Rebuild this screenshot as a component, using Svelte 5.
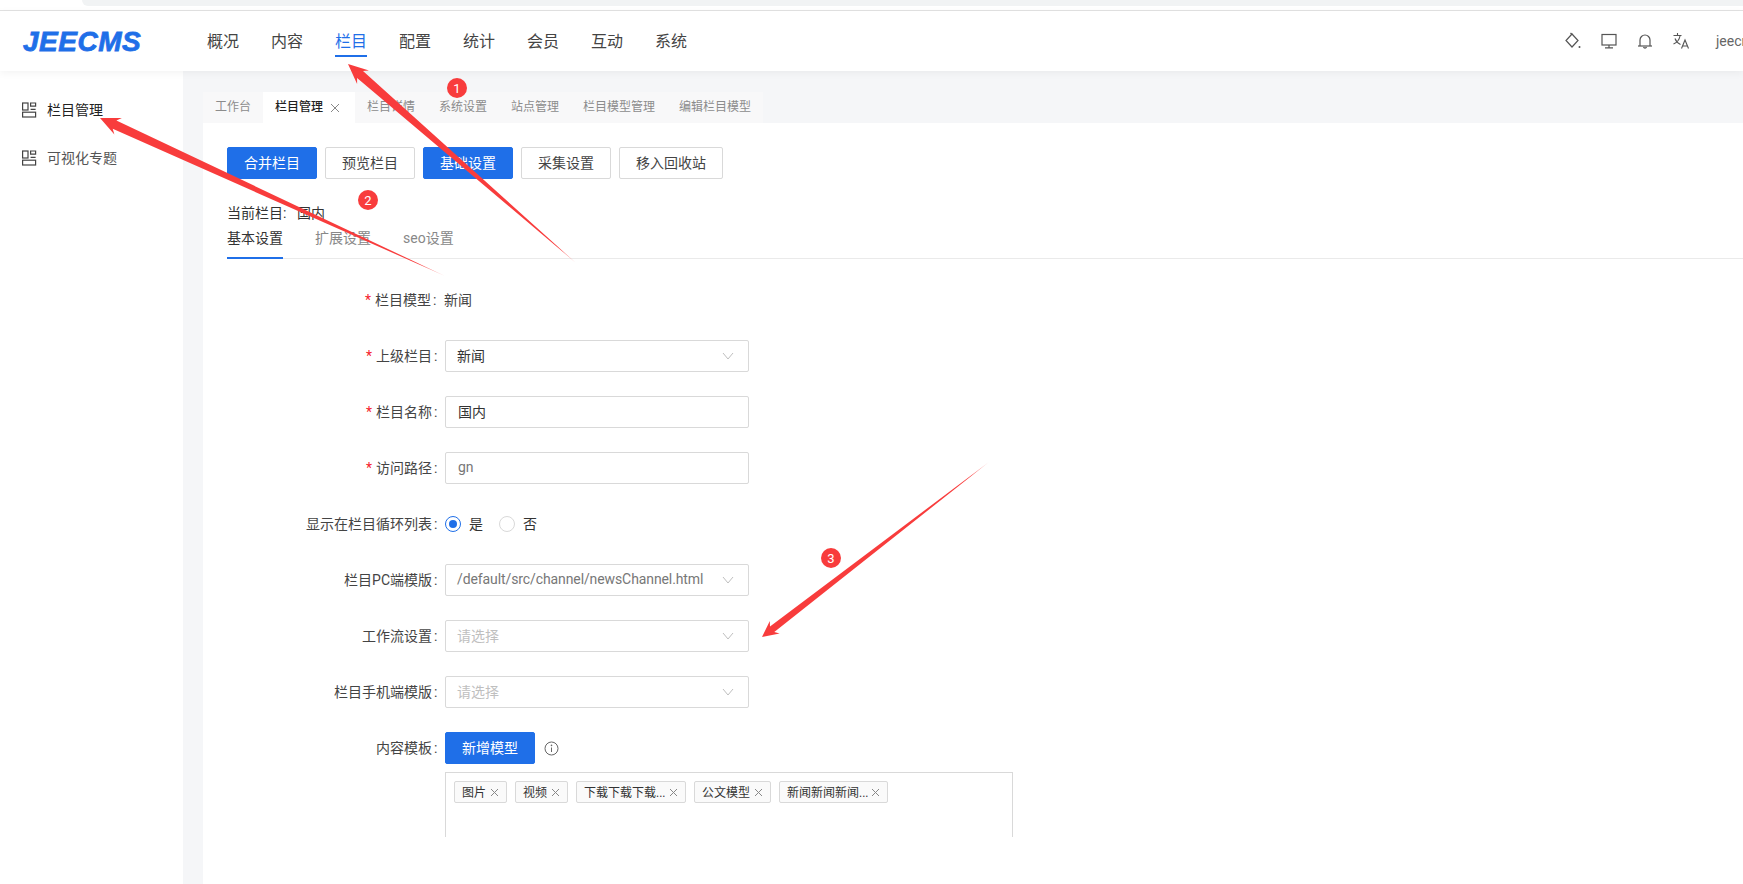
<script>
  const nav = ['概况', '内容', '栏目', '配置', '统计', '会员', '互动', '系统'];
  const tabs = ['工作台', '栏目管理', '栏目详情', '系统设置', '站点管理', '栏目模型管理', '编辑栏目模型'];
  const actions = [
    { t: '合并栏目', primary: true },
    { t: '预览栏目' },
    { t: '基础设置', primary: true },
    { t: '采集设置' },
    { t: '移入回收站' }
  ];
  const tags = [
    { t: '图片', w: 53 },
    { t: '视频', w: 53 },
    { t: '下载下载下载...', w: 110 },
    { t: '公文模型', w: 77 },
    { t: '新闻新闻新闻...', w: 109 }
  ];

  function arrow(tail, tip, len, half, neck) {
    const dx = tail[0] - tip[0], dy = tail[1] - tip[1];
    const d = Math.hypot(dx, dy);
    const ux = dx / d, uy = dy / d, px = -uy, py = ux;
    const at = (a, p) => `${(tip[0] + ux * a + px * p).toFixed(1)},${(tip[1] + uy * a + py * p).toFixed(1)}`;
    return [at(0, 0), at(len, half), at(len * 0.8, neck), `${tail[0]},${tail[1]}`, at(len * 0.8, -neck), at(len, -half)].join(' ');
  }
  const arrows = [
    { id: 'a1', tail: [576, 263], tip: [348, 64], len: 20, half: 9, neck: 4.5 },
    { id: 'a2', tail: [445, 276], tip: [100, 118], len: 20, half: 9, neck: 4.5 },
    { id: 'a3', tail: [989, 462], tip: [762, 637], len: 16, half: 8, neck: 3.5 }
  ];
  const badges = [
    { n: 1, x: 457, y: 88 },
    { n: 2, x: 368, y: 200 },
    { n: 3, x: 831, y: 558 }
  ];
</script>

<div class="page">
  <div class="chrome"><div class="chrome-tab"></div></div>

  <header class="header">
    <div class="logo">JEECMS</div>
    <nav class="nav">
      {#each nav as item}
        <span class="nav-item" class:active={item === '栏目'}>{item}</span>
      {/each}
    </nav>
    <div class="tools">
      <svg width="18" height="18" viewBox="0 0 18 18" fill="none" stroke="#555" stroke-width="1.2">
        <path d="M8 2 14 8.5 8 15 2 8.5Z" />
        <path d="M6.5 1 8 2.5" />
        <circle cx="15.5" cy="15" r="1" fill="#555" stroke="none" />
      </svg>
      <svg width="18" height="18" viewBox="0 0 18 18" fill="none" stroke="#555" stroke-width="1.2">
        <rect x="2" y="2.5" width="14" height="10.5" />
        <path d="M9 13v2.5M5 15.8h8" />
      </svg>
      <svg width="18" height="18" viewBox="0 0 18 18" fill="none" stroke="#555" stroke-width="1.2">
        <path d="M4 14V8a5 5 0 0 1 10 0v6" />
        <path d="M2 14h14" />
        <path d="M7.5 15a1.6 1.6 0 0 0 3 0" />
      </svg>
      <svg width="18" height="18" viewBox="0 0 18 18" fill="none" stroke="#555" stroke-width="1.1">
        <path d="M5.5 1v2M1.5 3.5h8M3 6.5c1 3 3.5 5 5.5 6M8 4c-.6 3.5-3 6.5-6.5 8" />
        <path d="M9.5 16.5 13 8l3.5 8.5M10.7 14h4.6" />
      </svg>
      <span class="user">jeecms</span>
    </div>
  </header>

  <div class="body">
    <aside class="side">
      {#each ['栏目管理', '可视化专题'] as s, i}
        <div class="side-item" class:cur={i === 0}>
          <svg width="16" height="16" viewBox="0 0 16 16" fill="none" stroke="#444" stroke-width="1.2">
            <rect x="1.6" y="1" width="5.4" height="7" />
            <path d="M9.6 1h5v3.2h-5zM9.6 7.4h5" />
            <rect x="1.6" y="10.2" width="13" height="4.8" />
          </svg>
          <span>{s}</span>
        </div>
      {/each}
    </aside>

    <main class="main">
      <div class="tabstrip">
        {#each tabs as t}
          <span class="tab" class:on={t === '栏目管理'}>
            {t}
            {#if t === '栏目管理'}
              <svg class="tab-x" width="10" height="10" viewBox="0 0 10 10" stroke="#888" stroke-width="1" fill="none"><path d="M1 1l8 8M9 1 1 9" /></svg>
            {/if}
          </span>
        {/each}
      </div>

      <section class="panel">
        <div class="actions">
          {#each actions as a}
            <button class="btn" class:primary={a.primary}>{a.t}</button>
          {/each}
        </div>
        <div class="current"><span class="cur-l">当前栏目:</span>国内</div>
        <div class="subtabs">
          <span class="subtab on">基本设置</span>
          <span class="subtab">扩展设置</span>
          <span class="subtab">seo设置</span>
        </div>

        <div class="form">
          <div class="row">
            <div class="label early"><i>*</i>栏目模型<b>:</b></div>
            <div class="static">新闻</div>
          </div>
          <div class="row">
            <div class="label"><i>*</i>上级栏目<b>:</b></div>
            <div class="select"><span>新闻</span>{@render chevron()}</div>
          </div>
          <div class="row">
            <div class="label"><i>*</i>栏目名称<b>:</b></div>
            <div class="select input"><span>国内</span></div>
          </div>
          <div class="row">
            <div class="label"><i>*</i>访问路径<b>:</b></div>
            <div class="select input"><span class="dim">gn</span></div>
          </div>
          <div class="row">
            <div class="label">显示在栏目循环列表<b>:</b></div>
            <div class="radios">
              <span class="radio checked"></span><span class="rt">是</span>
              <span class="radio"></span><span class="rt">否</span>
            </div>
          </div>
          <div class="row">
            <div class="label">栏目PC端模版<b>:</b></div>
            <div class="select"><span class="dim path">/default/src/channel/newsChannel.html</span>{@render chevron()}</div>
          </div>
          <div class="row">
            <div class="label">工作流设置<b>:</b></div>
            <div class="select"><span class="ph">请选择</span>{@render chevron()}</div>
          </div>
          <div class="row">
            <div class="label">栏目手机端模版<b>:</b></div>
            <div class="select"><span class="ph">请选择</span>{@render chevron()}</div>
          </div>
          <div class="row last">
            <div class="label">内容模板<b>:</b></div>
            <button class="btn primary">新增模型</button>
            <svg class="info" width="15" height="15" viewBox="0 0 15 15" fill="none" stroke="#666" stroke-width="1">
              <circle cx="7.5" cy="7.5" r="6.5" />
              <path d="M7.5 6.5v4.5" />
              <circle cx="7.5" cy="4.4" r=".8" fill="#666" stroke="none" />
            </svg>
          </div>
          <div class="tagbox">
            {#each tags as tag}
              <span class="tag" style="width:{tag.w}px">
                <span class="tag-t">{tag.t}</span>
                <svg width="9" height="9" viewBox="0 0 9 9" stroke="#888" stroke-width="1" fill="none"><path d="M1 1l7 7M8 1 1 8" /></svg>
              </span>
            {/each}
          </div>
        </div>
      </section>
    </main>
  </div>

  <svg class="marks" width="1743" height="884" viewBox="0 0 1743 884">
    <defs>
      {#each arrows as a}
        <linearGradient id={a.id} gradientUnits="userSpaceOnUse" x1={a.tip[0]} y1={a.tip[1]} x2={a.tail[0]} y2={a.tail[1]}>
          <stop offset="0" stop-color="#f83c3c" />
          <stop offset="0.92" stop-color="#f83c3c" />
          <stop offset="1" stop-color="#f83c3c" stop-opacity="0.4" />
        </linearGradient>
      {/each}
    </defs>
    {#each arrows as a}
      <polygon points={arrow(a.tail, a.tip, a.len, a.half, a.neck)} fill="url(#{a.id})" />
    {/each}
    {#each badges as b}
      <circle cx={b.x} cy={b.y} r="10" fill="#f83c3c" />
      <text x={b.x} y={b.y + 4.5} text-anchor="middle" class="badge-text">{b.n}</text>
    {/each}
  </svg>
</div>

{#snippet chevron()}
  <svg class="chev" width="12" height="8" viewBox="0 0 12 8" fill="none" stroke="#bfbfbf" stroke-width="1"><path d="M1 1l5 6 5-6" /></svg>
{/snippet}

<style>
  :global(body) {
    margin: 0;
    background: #fff;
  }
  .page {
    position: relative;
    width: 1743px;
    height: 884px;
    overflow: hidden;
    display: flex;
    flex-direction: column;
    font-family: Roboto, "Noto Sans CJK SC", sans-serif;
    font-size: 14px;
    color: #333;
    background: #fff;
  }
  .chrome {
    flex: none;
    height: 11px;
    box-sizing: border-box;
    border-bottom: 1px solid #e2e2e2;
  }
  .chrome-tab {
    height: 6px;
    margin-left: 82px;
    background: #f1f3f4;
    border-radius: 0 0 0 10px;
  }
  .header {
    flex: none;
    height: 60px;
    display: flex;
    align-items: center;
    background: #fff;
    position: relative;
    z-index: 1;
    box-shadow: 0 2px 8px rgba(0, 0, 0, 0.05);
  }
  .logo {
    width: 184px;
    padding: 2px 0 0 23px;
    box-sizing: border-box;
    flex: none;
    font-family: "Liberation Sans", sans-serif;
    font-weight: 700;
    font-style: italic;
    font-size: 28px;
    letter-spacing: 0.5px;
    color: #1f6fe8;
    -webkit-text-stroke: 0.8px #1f6fe8;
  }
  .nav {
    display: flex;
    gap: 32px;
    padding-left: 23px;
    flex: 1;
  }
  .nav-item {
    font-size: 16px;
    line-height: 32px;
    height: 30px;
    position: relative;
    color: #444;
    width: 32px;
    white-space: nowrap;
  }
  .nav-item.active {
    color: #1f6fe8;
  }
  .nav-item.active::after {
    content: "";
    position: absolute;
    left: 0;
    right: 0;
    bottom: -1px;
    height: 2px;
    background: #1f6fe8;
  }
  .tools {
    display: flex;
    align-items: center;
    gap: 18px;
    width: 179px;
    flex: none;
    overflow: hidden;
    box-sizing: border-box;
  }
  .tools svg {
    flex: none;
  }
  .user {
    color: #666;
    font-size: 14px;
    white-space: nowrap;
    margin-left: 8px;
  }
  .body {
    flex: 1;
    display: flex;
    min-height: 0;
  }
  .side {
    width: 183px;
    flex: none;
    padding-top: 15px;
    background: #fff;
    box-sizing: border-box;
  }
  .side-item {
    height: 48px;
    display: flex;
    align-items: center;
    gap: 10px;
    padding-left: 21px;
    color: #555;
  }
  .side-item span {
    padding-bottom: 2px;
  }
  .side-item.cur {
    color: #222;
  }
  .main {
    flex: 1;
    background: #f5f6f8;
    padding: 21px 0 0 20px;
    display: flex;
    flex-direction: column;
    min-width: 0;
  }
  .tabstrip {
    flex: none;
    display: flex;
    width: 560px;
    height: 31px;
    background: #f8f8f9;
    font-size: 12px;
    color: #8c8c8c;
  }
  .tab {
    padding: 0 12px;
    line-height: 31px;
    white-space: nowrap;
  }
  .tab.on {
    background: #fff;
    color: #222;
    font-weight: 500;
    display: flex;
    align-items: center;
    gap: 7px;
    padding-right: 15px;
  }
  .panel {
    flex: 1;
    background: #fff;
    padding: 24px 0 0 24px;
    min-height: 0;
  }
  .actions {
    display: flex;
    gap: 8px;
  }
  .btn {
    height: 32px;
    padding: 0 16px 3px;
    font: inherit;
    color: #444;
    background: #fff;
    border: 1px solid #d9d9d9;
    border-radius: 2px;
    flex: none;
    box-sizing: border-box;
  }
  .btn.primary {
    background: #1f6fe8;
    border-color: #1f6fe8;
    color: #fff;
  }
  .current {
    margin-top: 24px;
    line-height: 20px;
    color: #333;
  }
  .cur-l {
    display: inline-block;
    width: 70px;
  }
  .subtabs {
    display: flex;
    gap: 32px;
    height: 36px;
    border-bottom: 1px solid #eaeaea;
    box-sizing: border-box;
    padding-top: 5px;
  }
  .subtab {
    height: 31px;
    line-height: 20px;
    color: #888;
    box-sizing: border-box;
  }
  .subtab.on {
    color: #333;
    border-bottom: 2px solid #1f6fe8;
  }
  .form {
    margin-left: -24px;
    margin-top: 25px;
    height: 553px;
    overflow: hidden;
  }
  .row {
    display: flex;
    align-items: center;
    height: 32px;
    margin-bottom: 24px;
  }
  .row.last {
    margin-bottom: 8px;
  }
  .label {
    width: 242px;
    flex: none;
    padding: 0 8px 3px 0;
    box-sizing: border-box;
    text-align: right;
    color: #444;
    white-space: nowrap;
  }
  .label.early {
    padding-right: 9px;
  }
  .label i {
    font-style: normal;
    color: #f5222d;
    margin-right: 4px;
  }
  .label b {
    font-weight: 400;
    margin-left: 2px;
    display: inline-block;
    width: 3px;
  }
  .static {
    color: #444;
    margin-left: -1px;
    padding-bottom: 3px;
  }
  .select {
    width: 304px;
    height: 32px;
    border: 1px solid #d9d9d9;
    border-radius: 2px;
    box-sizing: border-box;
    padding: 0 14px 0 11px;
    display: flex;
    align-items: center;
    justify-content: space-between;
    color: #333;
  }
  .select > span {
    padding-bottom: 3px;
  }
  .select.input {
    padding-left: 12px;
  }
  .dim {
    color: #777;
  }
  .path {
    letter-spacing: -0.1px;
  }
  .ph {
    color: #bfbfbf;
  }
  .radios {
    display: flex;
    align-items: center;
  }
  .radio {
    width: 16px;
    height: 16px;
    border-radius: 50%;
    border: 1px solid #d9d9d9;
    box-sizing: border-box;
    position: relative;
    flex: none;
  }
  .radio.checked {
    border-color: #1f6fe8;
  }
  .radio.checked::after {
    content: "";
    position: absolute;
    inset: 3px;
    border-radius: 50%;
    background: #1f6fe8;
  }
  .rt {
    margin-left: 8px;
    width: 30px;
    color: #333;
    padding-bottom: 2px;
  }
  .info {
    margin-left: 9px;
  }
  .tagbox {
    margin-left: 242px;
    width: 568px;
    height: 120px;
    border: 1px solid #d9d9d9;
    box-sizing: border-box;
    padding: 8px;
    display: flex;
    align-items: flex-start;
    gap: 8px;
  }
  .tag {
    height: 22px;
    border: 1px solid #d9d9d9;
    border-radius: 2px;
    background: #fafafa;
    box-sizing: border-box;
    padding: 0 7px;
    display: flex;
    align-items: center;
    justify-content: space-between;
    font-size: 12px;
    color: #333;
    flex: none;
  }
  .tag-t {
    white-space: nowrap;
    padding-bottom: 2px;
  }
  .marks {
    position: absolute;
    left: 0;
    top: 0;
    z-index: 2;
    pointer-events: none;
  }
  .badge-text {
    fill: #fff;
    font-size: 13px;
    font-family: Roboto, sans-serif;
  }
</style>
